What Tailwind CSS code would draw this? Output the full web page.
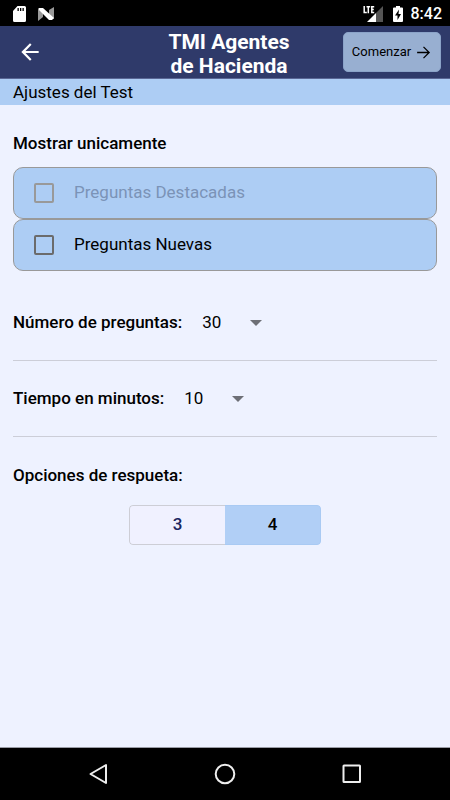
<!DOCTYPE html>
<html lang="es">
<head>
<meta charset="utf-8">
<meta name="viewport" content="width=device-width, initial-scale=1">
<title>TMI Agentes de Hacienda</title>
<script src="https://cdn.jsdelivr.net/npm/@tailwindcss/browser@4"></script>
</head>
<body class="flex min-h-screen flex-col bg-[#eef2ff] font-[Roboto,sans-serif] text-base text-black">
  <!-- Status bar -->
  <div class="flex h-[26px] items-center bg-black pt-px pr-2 pl-3 text-white">
    <svg class="h-4 w-[14px]" viewBox="0 0 14 16" aria-hidden="true"><path fill="#fff" d="M5.500 0h7a1.500 1.500 0 0 1 1.500 1.500v13a1.500 1.500 0 0 1-1.500 1.500h-10A1.500 1.500 0 0 1 1 14.500V5z"/><path fill="#000" d="M5.500 2h1.300v3H5.500zM8 2h1.300v3H8zM10.500 2h1.300v3h-1.300z"/></svg>
    <svg class="ml-3 h-4 w-4" viewBox="0 0 16 16" aria-hidden="true"><path fill="#999" d="M0 2l5 3v6l-5 4zM16 1v12l-5-3V4z"/><path fill="#fff" d="M1 2h4l11 10-2 2h-3L1 4z"/></svg>
    <div class="ml-auto flex items-center">
      <svg class="h-4 w-5" viewBox="0 0 20 16" aria-hidden="true"><path fill="#555" d="M20 0v16h-7V7z"/><path fill="#fff" d="M4 16l9-9v9z"/><path fill="none" stroke="#fff" stroke-width="1.500" d="M1.200 0v6.500h2.600M3.500.8h3.700M5.300.8V7.200M11.200.8H8.800v5.700h2.400M8.800 3.600h2"/></svg>
      <svg class="ml-[10px] h-4 w-[10px]" viewBox="0 0 10 16" aria-hidden="true"><path fill="#fff" d="M3 0h4v1.500h2a1 1 0 0 1 1 1V15a1 1 0 0 1-1 1H1a1 1 0 0 1-1-1V2.500a1 1 0 0 1 1-1h2z"/><path fill="#000" d="M6 3.500L2 9.500h2.500V14L8 8H5.500z"/></svg>
      <span class="ml-2 text-base font-medium">8:42</span>
    </div>
  </div>

  <header class="grid h-[53px] grid-cols-[1fr_auto_1fr] items-center border-b border-[#5a6795] bg-[#2f3a6a] pr-[9px] pl-[17px]">
    <button type="button" aria-label="Volver" class="flex size-[26px] items-center justify-center">
      <svg class="size-[26px]" viewBox="0 0 24 24" aria-hidden="true"><path fill="#fff" d="M20 11H7.830l5.590-5.590L12 4l-8 8 8 8 1.410-1.410L7.830 13H20z"/></svg>
    </button>
    <h1 class="pt-[3px] text-center text-[21px] leading-6 font-bold text-white">TMI Agentes<br>de Hacienda</h1>
    <button type="button" class="flex h-10 w-[98px] items-center justify-center gap-1 justify-self-end rounded-[5px] border border-[#8ba3c8] bg-[#98afd1] text-[13px]">
      Comenzar
      <svg class="size-[17px]" viewBox="0 0 24 24" aria-hidden="true"><path fill="none" stroke="#000" stroke-width="1.800" d="M3 12h17M12 4l8 8-8 8"/></svg>
    </button>
  </header>

  <h2 class="bg-[#adcdf4] px-[13px] text-[17px] leading-[26px]">Ajustes del Test</h2>

  <main class="flex flex-1 flex-col px-[13px] pt-7">
    <fieldset>
      <legend class="text-[17px] leading-5 font-medium">Mostrar unicamente</legend>
      <div class="mt-[14px] flex flex-col">
        <label class="flex h-[52px] items-center rounded-[10px] border border-[#999] bg-[#adcdf4] pl-5 text-[17px] text-[#7b93b7]">
          <input type="checkbox" disabled class="mr-5 size-5 appearance-none rounded-[2px] border-2 border-[#999] checked:bg-[#999]">
          Preguntas Destacadas
        </label>
        <label class="flex h-[52px] items-center rounded-[10px] border border-[#999] bg-[#adcdf4] pl-5 text-[17px]">
          <input type="checkbox" class="mr-5 size-5 appearance-none rounded-[2px] border-2 border-[#6b6b6b] checked:bg-[#6b6b6b]">
          Preguntas Nuevas
        </label>
      </div>
    </fieldset>

    <div class="mt-[15px] flex h-[75px] items-center gap-5 border-b border-[#ccced8]">
      <label for="preguntas" class="text-[17px] font-medium">Número de preguntas:</label>
      <div class="relative">
        <select id="preguntas" class="h-10 w-[60px] appearance-none text-[17px]"><option>10</option><option>20</option><option selected>30</option></select>
        <svg class="pointer-events-none absolute top-[17px] right-0 h-[6px] w-3" viewBox="0 0 12 6" aria-hidden="true"><path fill="#6d6f76" d="M0 0h12L6 6z"/></svg>
      </div>
    </div>

    <div class="flex h-[76px] items-center gap-5 border-b border-[#ccced8]">
      <label for="minutos" class="text-[17px] font-medium">Tiempo en minutos:</label>
      <div class="relative">
        <select id="minutos" class="h-10 w-[60px] appearance-none text-[17px]"><option selected>10</option><option>20</option><option>30</option></select>
        <svg class="pointer-events-none absolute top-[17px] right-0 h-[6px] w-3" viewBox="0 0 12 6" aria-hidden="true"><path fill="#6d6f76" d="M0 0h12L6 6z"/></svg>
      </div>
    </div>

    <section aria-labelledby="opciones" class="pt-7">
      <h3 id="opciones" class="text-[17px] leading-5 font-medium">Opciones de respueta:</h3>
      <div class="mx-auto mt-5 flex h-10 w-48 overflow-hidden rounded-[4px] text-[17px] font-medium">
        <button type="button" aria-pressed="false" class="flex-1 rounded-l-[4px] border border-r-0 border-[#cdced6] bg-[#f0f1ff] text-[#1a2560]">3</button>
        <button type="button" aria-pressed="true" class="flex-1 rounded-r-[4px] border border-l-0 border-[#a9caf3] bg-[#b1cff6]">4</button>
      </div>
    </section>
  </main>

  <!-- System navigation -->
  <nav class="flex h-[53px] items-center justify-center gap-[105px] border-t border-[#9a9ca5] bg-black">
    <button type="button" aria-label="Atrás"><svg class="block size-[22px]" viewBox="0 0 22 22" aria-hidden="true"><path fill="none" stroke="#eee" stroke-width="2" stroke-linejoin="round" d="M19 2v18L3.500 11z"/></svg></button>
    <button type="button" aria-label="Inicio"><svg class="block size-[22px]" viewBox="0 0 22 22" aria-hidden="true"><circle cx="11" cy="11" r="9.300" fill="none" stroke="#eee" stroke-width="2"/></svg></button>
    <button type="button" aria-label="Recientes"><svg class="block size-[22px]" viewBox="0 0 22 22" aria-hidden="true"><rect x="2.500" y="2.500" width="16.500" height="16.500" rx=".5" fill="none" stroke="#eee" stroke-width="2"/></svg></button>
  </nav>
</body>
</html>
